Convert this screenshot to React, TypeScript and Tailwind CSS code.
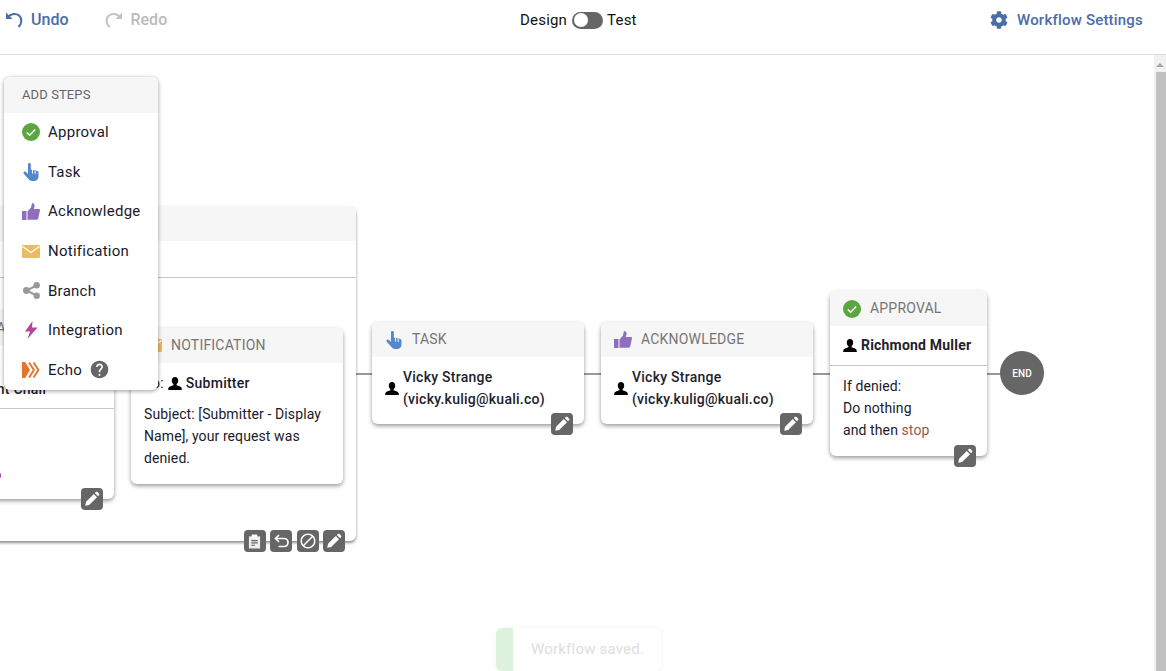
import type { ReactNode } from 'react';
import { FaCog } from 'react-icons/fa';
import { MdBlock, MdHelp } from 'react-icons/md';

const Check = () => (
  <svg viewBox="0 0 18 18" className="h-[18px] w-[18px]">
    <circle cx="9" cy="9" r="9" fill="#5aa63f" />
    <path d="M4.800 9.500l2.900 2.800L13.200 6.400" fill="none" stroke="#fff" strokeWidth="1.500" />
  </svg>
);

const Hand = () => (
  <svg viewBox="0 0 16 18" className="h-[18px] w-4">
    <path
      d="M5 1.300a1.400 1.400 0 0 1 2.800 0V6.500l6 1.200c1 .2 1.700 1 1.700 2v4c0 2.500-2 4.300-4.500 4.300H9c-1.500 0-2.500-.6-3.300-1.700L.8 10.800c-.6-.8-.4-1.700.2-2.100.7-.5 1.500-.3 2.100.3L5 11V1.300z"
      fill="#5288c9"
    />
    <path d="M9.500 7v3.500M12.200 7.500v3.500" stroke="#fff" strokeWidth="1" />
  </svg>
);

const Thumb = () => (
  <svg viewBox="0 0 18 17" className="h-[17px] w-[18px]">
    <rect y="8" width="4.500" height="9" fill="#8e6fbe" />
    <path
      d="M5.500 8.500l3.500-4L10 0c1.500 0 2.600 1 2.600 2.500 0 1-.4 2.500-.8 3.500H17c.8 0 1 .6 1 1.200L16.300 15c-.2 1-1 1.800-2 1.800H5.500z"
      fill="#8e6fbe"
    />
  </svg>
);

const Mail = () => (
  <svg viewBox="0 0 18 13" className="h-[13px] w-[18px]">
    <rect width="18" height="13" rx="1" fill="#eabb62" />
    <path d="M0.500 1.500L9 7.500l8.500-6" fill="none" stroke="#fff" strokeWidth="1.200" />
  </svg>
);

const Share = () => (
  <svg viewBox="0 0 17 17" className="h-[17px] w-[17px]">
    <path d="M13.500 3.500L3.500 8.500l10 5" fill="none" stroke="#999999" strokeWidth="2" />
    <circle cx="13.700" cy="3.200" r="3.200" fill="#999999" />
    <circle cx="13.700" cy="13.800" r="3.200" fill="#999999" />
    <circle cx="3.400" cy="8.500" r="3.400" fill="#999999" />
  </svg>
);

const Bolt = () => (
  <svg viewBox="0 0 14 18" className="h-[18px] w-[14px]">
    <path d="M8.500 0L1 10.500h5L3.500 18 13.500 6.500H8L8.500 0z" fill="#b2479b" />
  </svg>
);

const Echo = () => (
  <svg viewBox="0 0 18 16" className="h-4 w-[18px]">
    <path d="M0 0h3.200l4.800 8-4.800 8H0z" fill="#e5752c" />
    <path d="M5.500 0.500L10.300 8l-4.800 7.500M10 0.500L14.800 8 10 15.500" fill="none" stroke="#e5752c" strokeWidth="1.900" transform="translate(1.600 0)" />
  </svg>
);

const Person = () => (
  <svg viewBox="0 0 14 13" className="h-[13px] w-[14px] shrink-0">
    <path
      d="M7 0c2 0 3.200 1.500 3.200 3.400 0 1.600-.7 3-1.600 3.700v1.100c1.800.6 4.400 1.200 4.900 2.500.2.500.3 1.200.3 2.300H.2c0-1.100.1-1.800.3-2.300.5-1.300 3.100-1.900 4.900-2.500V7.100C4.500 6.400 3.800 5 3.800 3.400 3.800 1.500 5 0 7 0z"
      fill="#000"
    />
  </svg>
);

const Pencil = () => (
  <svg viewBox="0 0 16 16" className="h-4 w-4">
    <path d="M1.200 14.800l.9-4L9.800 3l3.200 3.200-7.800 7.700z" fill="#fff" />
    <path d="M10.800 2l1-1c.5-.5 1.200-.5 1.700 0l1.500 1.500c.5.5.5 1.200 0 1.700l-1 1z" fill="#fff" />
  </svg>
);

const Clipboard = () => (
  <svg viewBox="0 0 14 16" className="h-[15px] w-[13px]">
    <path d="M1 2.500h12V15.500H1z" fill="#eeeeee" />
    <rect x="4" y="0.500" width="6" height="3.500" fill="#fff" />
    <path d="M3.500 7h7M3.500 9.500h7M3.500 12h4" stroke="#666666" strokeWidth="1.200" />
  </svg>
);

const BackArrow = () => (
  <svg viewBox="0 0 18 18" className="h-[18px] w-[18px]">
    <path d="M3.500 6.500h8.500a4 4 0 0 1 0 8H6.500M7 3L3.500 6.500 7 10" fill="none" stroke="#fff" strokeWidth="1.700" />
  </svg>
);

const steps: { label: string; icon: ReactNode; help?: boolean }[] = [
  { label: 'Approval', icon: <Check /> },
  { label: 'Task', icon: <Hand /> },
  { label: 'Acknowledge', icon: <Thumb /> },
  { label: 'Notification', icon: <Mail /> },
  { label: 'Branch', icon: <Share /> },
  { label: 'Integration', icon: <Bolt /> },
  { label: 'Echo', icon: <Echo />, help: true },
];

function ActionButton({ children, className = '' }: { children: ReactNode; className?: string }) {
  return (
    <div className={`flex h-[22px] w-[22px] items-center justify-center rounded bg-[#666666] text-white ${className}`}>
      {children}
    </div>
  );
}

function Card({
  className,
  icon,
  title,
  editable = true,
  children,
}: {
  className: string;
  icon: ReactNode;
  title: string;
  editable?: boolean;
  children: ReactNode;
}) {
  return (
    <div className={`absolute rounded-md bg-white shadow-[0_2px_4px_rgba(0,0,0,0.4)] ${className}`}>
      <div className="flex h-[35px] items-center gap-[9px] rounded-t-md bg-[#f6f6f6] px-[13px] text-[14px] tracking-[0.2px] text-[#757575]">
        <span className="flex w-[18px] justify-center">{icon}</span>
        {title}
      </div>
      {children}
      {editable && (
        <ActionButton className="absolute right-[11px] bottom-[-11px]">
          <Pencil />
        </ActionButton>
      )}
    </div>
  );
}

function Assignee() {
  return (
    <div className="flex items-center gap-[4px] px-[13px] pt-[9px] font-medium leading-[22px] tracking-[0.25px] text-[#22222c]">
      <Person />
      <div>
        Vicky Strange
        <br />
        (vicky.kulig@kuali.co)
      </div>
    </div>
  );
}

export default function App() {
  return (
    <div className="flex h-[671px] w-[1166px] flex-col overflow-hidden bg-white font-['Roboto',sans-serif] text-[14px] tracking-[0.1px] text-[#1a1a2a]">
      <header className="flex h-[55px] shrink-0 border-b border-[#dddddd] pb-[14px] text-[15px] tracking-[0.2px]">
        <div className="flex w-[520px] items-center pl-[5px] text-[16px] font-medium tracking-normal">
          <button className="flex items-center gap-[8px] text-[#4a6da7]">
            <svg viewBox="0 0 18 18" className="h-[18px] w-[18px]">
              <path d="M1 1.500v6.500h6.500" fill="#4a6da7" />
              <path d="M2.500 6.500C6 2.500 11 2 14 4.500c3.400 2.800 3 8-.5 11.500" fill="none" stroke="#4a6da7" strokeWidth="2" />
            </svg>
            Undo
          </button>
          <button className="ml-[37px] flex items-center gap-[7px] text-[#bbbbbb]">
            <svg viewBox="0 0 18 18" className="h-[18px] w-[18px]">
              <path d="M17 1.500v6.500h-6.500" fill="#c4c4c4" />
              <path d="M15.500 6.500C12 2.500 7 2 4 4.500.6 7.300 1 12.500 4.500 16" fill="none" stroke="#c4c4c4" strokeWidth="2" />
            </svg>
            Redo
          </button>
        </div>
        <div className="flex items-center gap-[4px] text-[#111111]">
          Design
          <div className="ml-[1px] flex h-[17px] w-[31px] items-center rounded-full bg-[#666666] pl-[2px]">
            <div className="h-[14px] w-[14px] rounded-full bg-white" />
          </div>
          Test
        </div>
        <button className="ml-auto flex items-center gap-[9px] pr-[23px] font-medium text-[#4a6da7]">
          <FaCog className="h-[18px] w-[18px]" />
          Workflow Settings
        </button>
      </header>

      <div className="flex min-h-0 flex-1">
        <main className="relative flex-1 overflow-hidden">
          {/* connectors */}
          <div className="absolute top-[318px] left-[340px] h-[2px] w-[35px] bg-[#999999]" />
          <div className="absolute top-[318px] left-[580px] h-[2px] w-[25px] bg-[#999999]" />
          <div className="absolute top-[318px] left-[810px] h-[2px] w-[25px] bg-[#999999]" />
          <div className="absolute top-[318px] left-[985px] h-[2px] w-[20px] bg-[#999999]" />
          <div className="absolute top-[351px] left-[110px] h-[2px] w-[25px] bg-[#999999]" />

          {/* branch container */}
          <div className="absolute top-[151px] left-[-60px] h-[335px] w-[416px] rounded-md bg-white shadow-[0_2px_3px_rgba(0,0,0,0.45)]">
            <div className="h-[35px] rounded-t-md bg-[#f6f6f6]" />
            <div className="h-[37px] border-b border-[#c8c8c8]" />
            <div className="absolute right-[11px] bottom-[-11px] flex gap-[4.500px]">
              <ActionButton>
                <Clipboard />
              </ActionButton>
              <ActionButton>
                <BackArrow />
              </ActionButton>
              <ActionButton>
                <MdBlock className="h-[18px] w-[18px]" />
              </ActionButton>
              <ActionButton>
                <Pencil />
              </ActionButton>
            </div>
          </div>

          <Card className="top-[256px] left-[-98px] h-[188px] w-[212px]" icon={<Check />} title="APPROVAL">
            <div className="h-[63px] whitespace-nowrap border-b border-[#c8c8c8] pt-[10px] pl-[31px] font-medium leading-[22px] tracking-[0.25px]">
              <div className="pl-[5px]">Chairman</div>
              <div>Department Chair</div>
            </div>
            <div className="absolute bottom-[21px] left-[96px] h-[5px] w-[3px] rounded-full bg-[#b2479b]" />
          </Card>

          <Card className="top-[273px] left-[131px] h-[156px] w-[212px]" icon={<Mail />} title="NOTIFICATION" editable={false}>
            <div className="flex items-center gap-[4px] px-[13px] pt-[9px] font-medium leading-[22px] tracking-[0.25px]">
              <span className="font-normal">To:</span>
              <Person />
              <span>Submitter</span>
            </div>
            <p className="px-[13px] pt-[9px] leading-[22px]">Subject: [Submitter - Display Name], your request was denied.</p>
          </Card>

          <Card className="top-[267px] left-[372px] h-[102px] w-[212px]" icon={<Hand />} title="TASK">
            <Assignee />
          </Card>

          <Card className="top-[267px] left-[601px] h-[102px] w-[212px]" icon={<Thumb />} title="ACKNOWLEDGE">
            <Assignee />
          </Card>

          <Card className="top-[236px] left-[830px] h-[165px] w-[157px]" icon={<Check />} title="APPROVAL">
            <div className="flex h-[40px] items-center gap-[4px] border-b border-[#c8c8c8] px-[13px] font-bold tracking-[0.2px] text-[#22222c]">
              <Person />
              Richmond Muller
            </div>
            <div className="px-[13px] pt-[9px] leading-[22px]">
              <div>If denied:</div>
              <div>Do nothing</div>
              <div>
                and then <span className="text-[#a2544f]">stop</span>
              </div>
            </div>
          </Card>

          <div className="absolute top-[296px] left-[1000px] flex h-[44px] w-[44px] items-center justify-center rounded-full bg-[#666666] text-[10px] font-medium text-white">
            END
          </div>

          {/* add steps menu */}
          <aside className="absolute top-[22px] left-[4px] w-[154px] rounded-md bg-white shadow-[0_1px_4px_rgba(0,0,0,0.4)]">
            <div className="flex h-[36px] items-center rounded-t-md bg-[#f6f6f6] pl-[18px] text-[13px] text-[#666666]">ADD STEPS</div>
            <ul className="-mt-[0.4px] pb-[0.4px]">
              {steps.map((step) => (
                <li key={step.label} className="flex h-[39.600px] items-center text-[15px] tracking-[0.25px]">
                  <span className="flex w-[44px] justify-start pl-[18px]">
                    <span className="flex w-[18px] justify-center">{step.icon}</span>
                  </span>
                  {step.label}
                  {step.help && <MdHelp className="ml-[7px] h-[21px] w-[21px] text-[#666666]" />}
                </li>
              ))}
            </ul>
          </aside>

          {/* toast fading out */}
          <div className="absolute top-[573px] left-[496px] flex h-[43px] w-[165px] rounded-md bg-white shadow-[0_1px_6px_rgba(0,0,0,0.05)]">
            <div className="w-[17px] rounded-l-md bg-[#dcf2dc]" />
            <span className="flex items-center pl-[18px] text-[15px] tracking-[0.2px] text-[#dedede]">Workflow saved.</span>
          </div>
        </main>

        {/* scrollbar */}
        <div className="flex w-[12px] shrink-0 flex-col bg-[#f1f1f1]">
          <div className="flex h-[17px] items-center justify-center pt-[3px]">
            <div className="h-0 w-0 border-x-[4px] border-b-[4px] border-x-transparent border-b-[#a3a3a3]" />
          </div>
          <div className="ml-[2px] flex-1 bg-[#c1c1c1]" />
        </div>
      </div>
    </div>
  );
}
